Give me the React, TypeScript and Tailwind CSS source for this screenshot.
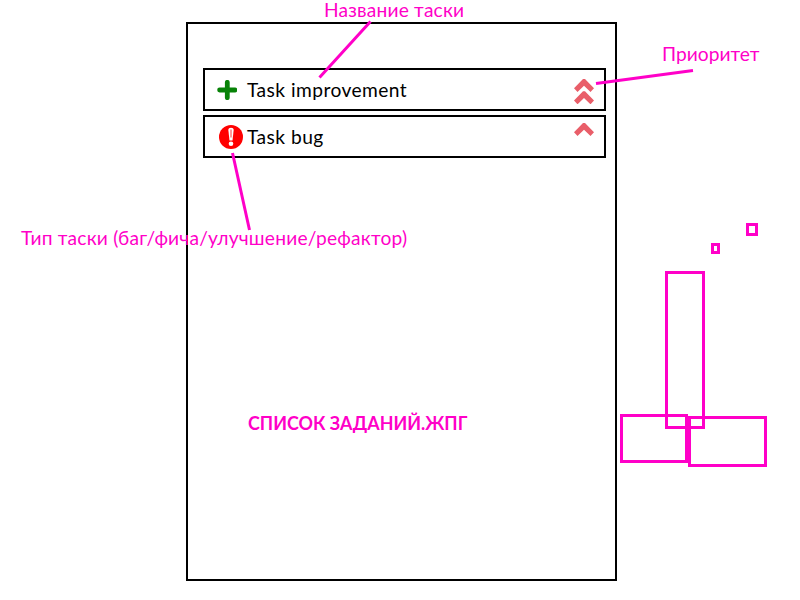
import React from "react";

const chevron = "M9 0H11L20 9.3L16.5 13L10 6.8L3.5 13L0 9.3Z";

function PlusIcon() {
  return (
    <svg width="20" height="20" viewBox="0 0 20 20" className="shrink-0" aria-hidden="true">
      <path d="M10.3 2.3V17.7M2.6 10H18" stroke="#078207" strokeWidth="4.8" strokeLinecap="round" fill="none" />
    </svg>
  );
}

function BugIcon() {
  return (
    <svg width="24" height="24" viewBox="0 0 24 24" className="shrink-0" aria-hidden="true">
      <circle cx="12" cy="12" r="12" fill="#ff0000" />
      <path d="M9.3 4.8Q9.3 2.8 12 2.8T14.7 4.8L13.5 15.5H10.5Z" fill="#fff" />
      <path d="M12 4.5V12.5" stroke="#ff0000" strokeWidth="0.8" />
      <circle cx="12" cy="18.8" r="2.3" fill="#fff" />
    </svg>
  );
}

function Priority({ level }: { level: number }) {
  return (
    <svg width="20" height="29" viewBox="0 0 20 29" className="shrink-0" aria-hidden="true">
      <path d={chevron} transform={level > 1 ? "translate(0 4)" : "translate(0 1)"} fill="#e95e69" />
      {level > 1 && <path d={chevron} transform="translate(0 16.3)" fill="#e95e69" />}
    </svg>
  );
}

const label = "absolute whitespace-nowrap leading-6 text-[#ff00c8]";
const box = "absolute border-3 border-[#ff00c8]";
const title = "grow text-[19.2px] leading-6 tracking-[0.4px] [word-spacing:0.4px] text-black";

export default function App() {
  return (
    <div className="relative h-[600px] w-[800px] overflow-hidden bg-white font-['Lato','Open_Sans',sans-serif]">
      <main className="flex h-full pt-[22px] pl-[186px]">
        <section className="flex h-[559px] w-[431px] flex-col gap-1 border-2 border-black pt-11 pr-[9px] pl-[15px]">
          <div className="flex h-[43px] items-center gap-2.5 border-2 border-black pr-2.5 pl-3">
            <PlusIcon />
            <span className={title}>Task improvement</span>
            <Priority level={2} />
          </div>
          <div className="flex h-[43px] items-center gap-1 border-2 border-black pr-2.5 pl-3.5">
            <BugIcon />
            <span className={title}>Task bug</span>
            <Priority level={1} />
          </div>
        </section>
      </main>

      <div className={`${box} left-[665px] top-[271px] h-[158px] w-10`} />
      <div className={`${box} left-[620px] top-[414px] h-[49px] w-[68px]`} />
      <div className={`${box} left-[688px] top-[416px] h-[51px] w-[79px]`} />
      <div className={`${box} left-[711px] top-[243px] h-[11px] w-[9px]`} />
      <div className={`${box} left-[746px] top-[223px] h-[13px] w-3`} />

      <svg width="800" height="600" className="absolute left-0 top-0" aria-hidden="true">
        <path d="M370.5 21.5L319.5 77.5M596 83.5L693 70.5M232.5 153L249.5 230" stroke="#ff00c8" strokeWidth="3" fill="none" />
      </svg>

      <span className="absolute left-[324px] top-0 whitespace-nowrap text-[19.2px] leading-5 tracking-[0.18px] text-[#ff00c8]">Название таски</span>
      <span className={`${label} left-[662px] top-[42px] text-[19.2px]`}>Приоритет</span>
      <span className={`${label} left-[21px] top-[226px] text-[19.2px] tracking-[0.2px]`}>Тип таски (баг/фича/улучшение/рефактор)</span>
      <span className={`${label} left-[248px] top-[411px] origin-left scale-x-[0.957] text-[18.7px] font-bold`}>СПИСОК ЗАДАНИЙ.ЖПГ</span>
    </div>
  );
}
